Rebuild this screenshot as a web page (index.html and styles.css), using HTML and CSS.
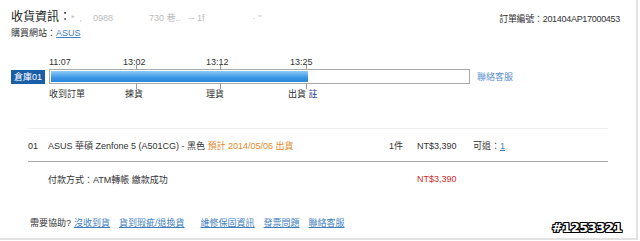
FILE: index.html
```html
<!DOCTYPE html>
<html lang="zh-TW">
<head>
    <meta charset="UTF-8">
    <title>訂單明細</title>
    <link rel="stylesheet" href="styles.css">
</head>
<body>
    <div class="page">
        <div class="head">
            <div class="title">
                收貨資訊：<span class="masked">*&nbsp;&nbsp;,</span><span class="masked m1">0988</span><span class="masked m2">730 巷..</span><span class="masked m3">-- 1f</span><span class="masked m4">· ''</span>
            </div>
            <div class="order-no">訂單編號：201404AP17000453</div>
        </div>
        <div class="site">購買網站：<a href="#">ASUS</a></div>

        <div class="timeline">
            <div class="tl-times">
                <span style="left:0px">11:07</span>
                <span style="left:74px">13:02</span>
                <span style="left:157px">13:12</span>
                <span style="left:241px">13:25</span>
            </div>
            <div class="tl-row">
                <span class="warehouse">倉庫01</span>
                <div class="track">
                    <div class="fill" style="width:257px"></div>
                    <i class="tick" style="left:86px"></i>
                    <i class="tick" style="left:170px"></i>
                    <i class="tick" style="left:256px"></i>
                </div>
                <a class="service" href="#">聯絡客服</a>
            </div>
            <div class="tl-steps">
                <span style="left:0px">收到訂單</span>
                <span style="left:76px">揀貨</span>
                <span style="left:157px">理貨</span>
                <span style="left:239px">出貨 <a href="#">註</a></span>
            </div>
        </div>

        <div class="items">
            <div class="item">
                <span class="no">01</span>
                <span class="name">ASUS 華碩 Zenfone 5 (A501CG) - 黑色 <em>預計 2014/05/06 出貨</em></span>
                <span class="qty">1件</span>
                <span class="price">NT$3,390</span>
                <span class="refund">可退：<a href="#">1</a></span>
            </div>
            <div class="pay">
                <span class="name">付款方式：ATM轉帳 繳款成功</span>
                <span class="total">NT$3,390</span>
            </div>
        </div>

        <div class="help">
            <span>需要協助?</span>
            <a href="#">沒收到貨</a>
            <a class="wide" href="#">貨到瑕疵/退換貨</a>
            <a href="#">維修保固資訊</a>
            <a href="#">發票問題</a>
            <a href="#">聯絡客服</a>
        </div>

        <div class="stamp">#1253321</div>
    </div>
</body>
</html>
```

FILE: styles.css
```css
* {
    margin: 0;
    padding: 0;
    box-sizing: border-box;
}

body {
    background: #fff;
    font-family: "Liberation Sans", "Noto Sans CJK TC", sans-serif;
    font-size: 9px;
    color: #333;
}

.page {
    position: relative;
    width: 638px;
    height: 240px;
    border-right: 2px solid #e2e2e2;
    border-bottom: 2px solid #e2e2e2;
    padding: 8px 0 0 11px;
}

a {
    color: #3f7fc0;
}

.head {
    display: flex;
    justify-content: space-between;
    align-items: flex-end;
    padding-right: 16px;
    height: 18px;
}

.title {
    font-size: 12px;
    line-height: 16px;
    color: #222;
}

.masked {
    color: #bbb;
    font-size: 9px;
}

.m1 { margin-left: 11px; }
.m2 { margin-left: 36px; }
.m3 { margin-left: 8px; }
.m4 { margin-left: 48px; }

.order-no {
    color: #333;
    margin-bottom: 1px;
    letter-spacing: -0.3px;
}

.site {
    margin-top: 1px;
    line-height: 13px;
}

/* timeline */
.timeline {
    margin-top: 16px;
}

.tl-times,
.tl-steps {
    position: relative;
    height: 12px;
    margin-left: 38px;
    line-height: 12px;
}

.tl-times span,
.tl-steps span {
    position: absolute;
    top: 0;
    white-space: nowrap;
}

.tl-times {
    margin-bottom: 1px;
}

.tl-steps {
    margin-top: 4px;
}

.tl-steps a {
    color: #2d3f9a;
    text-decoration: none;
}

.tl-row {
    display: flex;
    align-items: center;
    gap: 4px;
}

.warehouse {
    width: 34px;
    height: 14px;
    line-height: 14px;
    background: #1b5ea8;
    color: #fff;
    text-align: center;
}

.track {
    position: relative;
    width: 421px;
    height: 15px;
    border: 1px solid #aaa;
    padding: 1px;
}

.fill {
    height: 100%;
    background: linear-gradient(#8ecbf7, #3b95e6 60%, #2c86db);
}

.tick {
    position: absolute;
    top: -5px;
    bottom: -6px;
    width: 1px;
    background: linear-gradient(#999 4px, transparent 4px, transparent calc(100% - 5px), #999 calc(100% - 5px));
}

.service {
    margin-left: 3px;
    text-decoration: none;
    color: #5a8fc8;
}

/* items */
.items {
    margin: 28px 28px 0 17px;
    border-top: 1px solid #f0f0f0;
}

.item {
    display: flex;
    align-items: center;
    height: 33px;
    border-bottom: 1px solid #aaa;
    padding-top: 1px;
}

.no {
    width: 20px;
}

.name {
    flex: 1;
}

.name em {
    font-style: normal;
    color: #e08a2a;
}

.qty {
    width: 28px;
}

.price {
    width: 56px;
}

.refund {
    width: 135px;
}

.pay {
    display: flex;
    align-items: center;
    height: 34px;
    padding-left: 20px;
}

.total {
    width: 191px;
    color: #d02c2c;
}

/* help */
.help {
    display: flex;
    gap: 9px;
    margin: 20px 0 0 19px;
}

.help span {
    margin-right: -6px;
}

.help .wide {
    margin-right: 7px;
}

.stamp {
    position: absolute;
    right: 14px;
    bottom: 3px;
    font: bold 13px "DejaVu Sans", sans-serif;
    color: #fff;
    letter-spacing: -0.5px;
    text-shadow: -1px -1px 0 #000, 1px -1px 0 #000, -1px 1px 0 #000, 1px 1px 0 #000, 0 1px 0 #000, 0 -1px 0 #000, 1px 0 0 #000, -1px 0 0 #000;
}
```
